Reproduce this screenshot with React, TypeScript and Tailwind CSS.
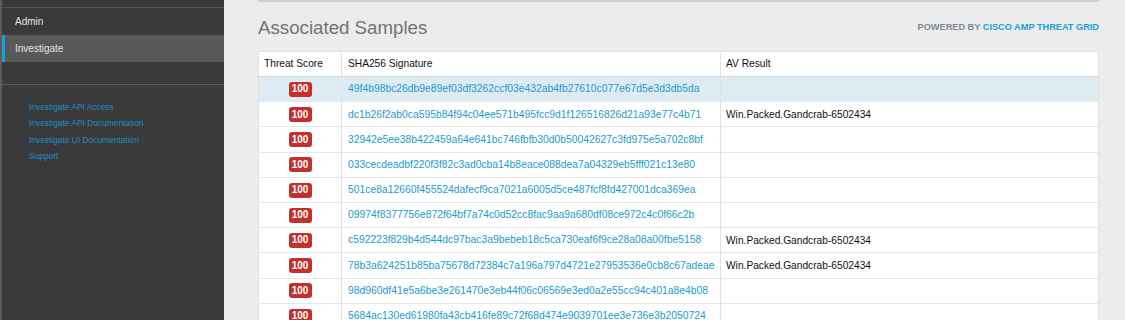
const rows = [
  { hash: '49f4b98bc26db9e89ef03df3262ccf03e432ab4fb27610c077e67d5e3d3db5da', av: '' },
  { hash: 'dc1b26f2ab0ca595b84f94c04ee571b495fcc9d1f126516826d21a93e77c4b71', av: 'Win.Packed.Gandcrab-6502434' },
  { hash: '32942e5ee38b422459a64e641bc746fbfb30d0b50042627c3fd975e5a702c8bf', av: '' },
  { hash: '033cecdeadbf220f3f82c3ad0cba14b8eace088dea7a04329eb5fff021c13e80', av: '' },
  { hash: '501ce8a12660f455524dafecf9ca7021a6005d5ce487fcf8fd427001dca369ea', av: '' },
  { hash: '09974f8377756e872f64bf7a74c0d52cc8fac9aa9a680df08ce972c4c0f66c2b', av: '' },
  { hash: 'c592223f829b4d544dc97bac3a9bebeb18c5ca730eaf6f9ce28a08a00fbe5158', av: 'Win.Packed.Gandcrab-6502434' },
  { hash: '78b3a624251b85ba75678d72384c7a196a797d4721e27953536e0cb8c67adeae', av: 'Win.Packed.Gandcrab-6502434' },
  { hash: '98d960df41e5a6be3e261470e3eb44f06c06569e3ed0a2e55cc94c401a8e4b08', av: '' },
  { hash: '5684ac130ed61980fa43cb416fe89c72f68d474e9039701ee3e736e3b2050724', av: '' },
]

const links = [
  'Investigate API Access',
  'Investigate API Documentation',
  'Investigate UI Documentation',
  'Support',
]

function Sidebar() {
  return (
    <aside className="w-[224px] shrink-0 h-full bg-[#3a3a3b] border-l-2 border-[#5c5c5c] flex flex-col">
      <div className="h-[8px] border-b border-[#555]" />
      <div className="h-[27px] flex items-center pl-[13px] text-[10px] text-[#e4e4e4]">Admin</div>
      <div className="h-[27px] flex items-center bg-[#59595a] text-[10px] text-[#e4e4e4]">
        <span className="w-[3px] h-full bg-[#1ba0d7]" />
        <span className="pl-[10px]">Investigate</span>
      </div>
      <div className="h-[23px] border-b border-[#5a5a5a]" />
      <ul className="pt-[14px] pl-[27px] flex flex-col">
        {links.map((l) => (
          <li key={l} className="h-[16.4px] leading-[16px] text-[8.4px] text-[#1f8dc4]">
            {l}
          </li>
        ))}
      </ul>
    </aside>
  )
}

function Badge() {
  return (
    <span className="inline-flex items-center justify-center w-[23px] h-[15px] rounded-[3px] bg-[#c4302b] text-white text-[10px] font-bold leading-none">
      100
    </span>
  )
}

export default function App() {
  return (
    <div
      className="w-[1125px] h-[320px] overflow-hidden flex bg-[#ececec]"
      style={{ fontFamily: '"Liberation Sans", Arial, sans-serif' }}
    >
      <Sidebar />
      <main className="flex-1 pl-[34px] pr-[26px] flex flex-col">
        <div className="h-[6px] bg-white border-b-2 border-[#cfcfcf] flex">
          <div className="w-[280px] border-r border-[#e2e2e2]" />
        </div>
        <div className="mt-[15px] h-[22px] flex items-center justify-between">
          <h2 className="text-[18.7px] font-light text-[#727272]">Associated Samples</h2>
          <div className="text-[9.2px] font-bold">
            <span className="text-[#7d8a96]">POWERED BY </span>
            <span className="text-[#1ba0d7]">CISCO AMP THREAT GRID</span>
          </div>
        </div>
        <table className="mt-[12px] w-full border-collapse bg-white text-[10.2px] text-[#111] border border-[#e2e2e2]">
          <thead>
            <tr className="h-[25px]">
              <th className="w-[83px] text-left font-normal pl-[5px] border-r border-[#e2e2e2]">Threat Score</th>
              <th className="w-[379px] text-left font-normal pl-[6px] border-r border-[#e2e2e2]">SHA256 Signature</th>
              <th className="text-left font-normal pl-[5px]">AV Result</th>
            </tr>
          </thead>
          <tbody>
            {rows.map((r, i) => (
              <tr
                key={r.hash}
                className={`h-[25.2px] border-t ${i === 0 ? 'bg-[#dfebf2] border-[#d2d8dc]' : 'border-[#e6e6e6]'}`}
              >
                <td className="text-center border-r border-[#e2e2e2]">
                  <Badge />
                </td>
                <td className="pl-[6px] text-[10.35px] text-[#1a9bd3] border-r border-[#e2e2e2] whitespace-nowrap">
                  {r.hash}
                </td>
                <td className="pl-[5px] whitespace-nowrap">{r.av}</td>
              </tr>
            ))}
          </tbody>
        </table>
      </main>
    </div>
  )
}
